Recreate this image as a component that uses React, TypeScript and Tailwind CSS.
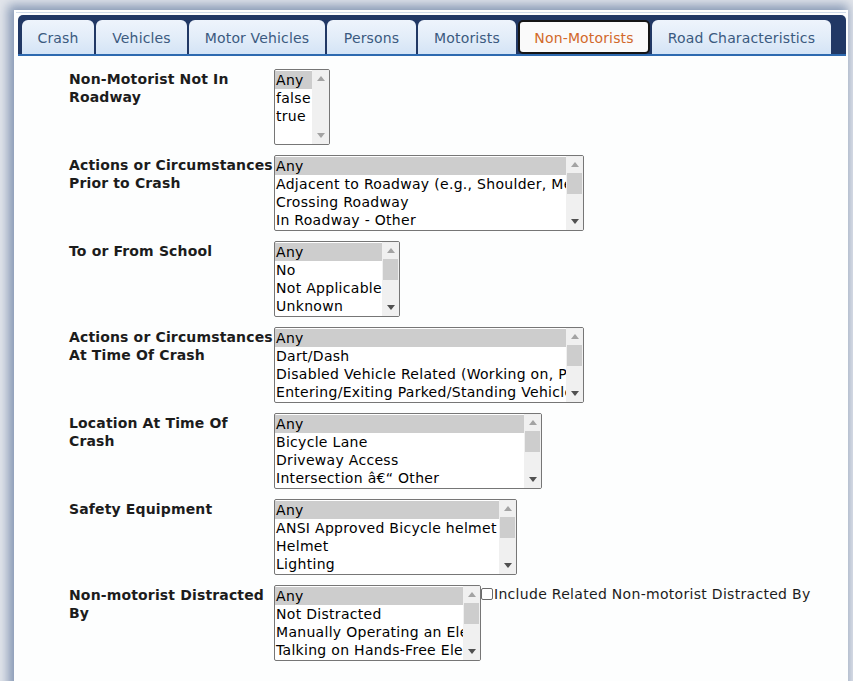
import React from "react";

type ListProps = {
  options: string[];
  width: string;
  scroll?: boolean;
};

const tabs = [
  { label: "Crash", w: "w-[72px]" },
  { label: "Vehicles", w: "w-[91px]" },
  { label: "Motor Vehicles", w: "w-[136px]" },
  { label: "Persons", w: "w-[89px]" },
  { label: "Motorists", w: "w-[98px]" },
  { label: "Non-Motorists", w: "w-[132px]", active: true },
  { label: "Road Characteristics", w: "w-[179px]" },
];

function Arrow({ up, dark }: { up?: boolean; dark?: boolean }) {
  return (
    <div className="h-[17px] flex items-center justify-center">
      <svg width="8" height="5" viewBox="0 0 8 5">
        <path
          d={up ? "M0 5 L4 0 L8 5 Z" : "M0 0 L4 5 L8 0 Z"}
          fill={dark ? "#505050" : "#a3a3a3"}
        />
      </svg>
    </div>
  );
}

// fake multi-select list box, 4 rows visible
function ListBox({ options, width, scroll = true }: ListProps) {
  return (
    <div
      className={`${width} h-[76px] shrink-0 flex border border-[#767676] rounded-[2px] bg-white overflow-hidden`}
    >
      <div className="flex-1 min-w-0 py-[1px]">
        {options.map((o, i) => (
          <div
            key={o}
            className={`h-[18px] leading-[18px] pl-[1px] whitespace-nowrap overflow-hidden text-[14px] tracking-[0.3px] text-black ${
              i === 0 ? "bg-[#cdcdcd]" : ""
            }`}
          >
            {o}
          </div>
        ))}
      </div>
      <div className="w-[17px] shrink-0 bg-[#f0f0f0] flex flex-col">
        <Arrow up />
        <div className="flex-1 px-[1px]">
          {scroll && <div className="h-[21px] bg-[#cdcdcd]" />}
        </div>
        <Arrow dark={scroll} />
      </div>
    </div>
  );
}

function Row({ label, children }: { label: string[]; children: React.ReactNode }) {
  return (
    <div className="flex items-start">
      <div className="w-[205px] shrink-0 font-bold text-[14px] leading-[18px] tracking-[0.15px] text-[#1c1c1c] pt-[1px]">
        {label.map((l) => (
          <div key={l} className="whitespace-nowrap">
            {l}
          </div>
        ))}
      </div>
      {children}
    </div>
  );
}

export default function App() {
  return (
    <div
      className="w-[853px] h-[681px] overflow-hidden bg-[#e3e6ec] pt-[10px] pl-[14px]"
      style={{ fontFamily: '"DejaVu Sans", Verdana, sans-serif' }}
    >
      <div className="w-[834px] h-[700px] bg-[#fdfefe] pt-[2px] shadow-[-3px_-2px_10px_3px_rgba(120,140,172,0.85)]">
        <div className="h-[1px] mx-[2px] bg-[#cfdbea]" />
        <div className="pt-[2px] px-[4px]">
          {/* tab strip */}
          <div className="h-[41px] w-[828px] bg-[#213865] rounded-t-[5px] flex items-end gap-[2px] pl-[4px] border-b-[2px] border-[#2e6ab0]">
            {tabs.map((t) =>
              t.active ? (
                <div
                  key={t.label}
                  className={`${t.w} h-[34px] pt-[2px] flex items-center justify-center bg-[#fafafa] border-2 border-[#151515] rounded-[5px] text-[14px] tracking-[0.15px] text-[#d2692a]`}
                >
                  {t.label}
                </div>
              ) : (
                <div
                  key={t.label}
                  className={`${t.w} h-[34px] pt-[2px] flex items-center justify-center rounded-t-[6px] bg-gradient-to-b from-[#eef4fc] via-[#e3edf9] to-[#d4e4f6] text-[14px] tracking-[0.15px] text-[#3b5a80]`}
                >
                  {t.label}
                </div>
              )
            )}
          </div>
        </div>

        {/* filter form */}
        <div className="pl-[55px] pt-[13px] flex flex-col gap-[10px]">
          <Row label={["Non-Motorist Not In", "Roadway"]}>
            <ListBox width="w-[56px]" scroll={false} options={["Any", "false", "true"]} />
          </Row>
          <Row label={["Actions or Circumstances", "Prior to Crash"]}>
            <ListBox
              width="w-[310px]"
              options={[
                "Any",
                "Adjacent to Roadway (e.g., Shoulder, Median)",
                "Crossing Roadway",
                "In Roadway - Other",
              ]}
            />
          </Row>
          <Row label={["To or From School"]}>
            <ListBox width="w-[126px]" options={["Any", "No", "Not Applicable", "Unknown"]} />
          </Row>
          <Row label={["Actions or Circumstances", "At Time Of Crash"]}>
            <ListBox
              width="w-[310px]"
              options={[
                "Any",
                "Dart/Dash",
                "Disabled Vehicle Related (Working on, Pushing)",
                "Entering/Exiting Parked/Standing Vehicle",
              ]}
            />
          </Row>
          <Row label={["Location At Time Of", "Crash"]}>
            <ListBox
              width="w-[268px]"
              options={["Any", "Bicycle Lane", "Driveway Access", "Intersection \u00e2\u20ac\u201c Other"]}
            />
          </Row>
          <Row label={["Safety Equipment"]}>
            <ListBox
              width="w-[243px]"
              options={["Any", "ANSI Approved Bicycle helmet", "Helmet", "Lighting"]}
            />
          </Row>
          <Row label={["Non-motorist Distracted", "By"]}>
            <ListBox
              width="w-[207px]"
              options={[
                "Any",
                "Not Distracted",
                "Manually Operating an Electronic Device",
                "Talking on Hands-Free Electronic Device",
              ]}
            />
            <label className="flex items-start text-[14px] leading-[18px] tracking-[0.3px] text-[#1c1c1c]">
              <span className="mt-[3px] w-[12px] h-[12px] border border-[#6b6b6b] bg-white rounded-[2px] mr-[1px]" />
              Include Related Non-motorist Distracted By
            </label>
          </Row>
        </div>
      </div>
    </div>
  );
}
